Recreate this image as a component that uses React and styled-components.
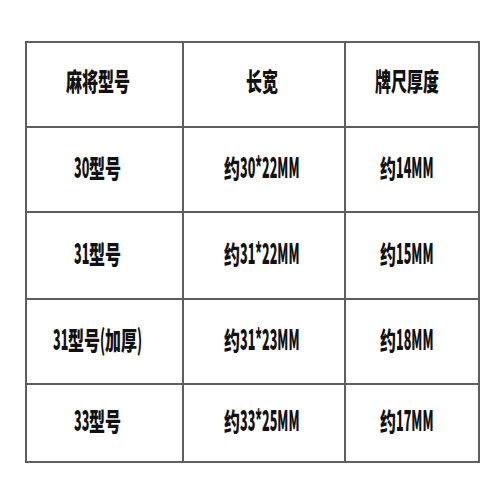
import React, { useLayoutEffect, useRef, useState } from "react";
import styled, { createGlobalStyle } from "styled-components";

const Global = createGlobalStyle`
  html, body { margin: 0; padding: 0; background: #fff; }
  body { width: 500px; height: 500px; overflow: hidden; }
`;

const Page = styled.div`
  padding: 41px 0 0 25px;
`;

const Grid = styled.div`
  display: inline-grid;
  grid-template-columns: 155px 160px 132px;
  grid-template-rows: 83px 83px 85px 83px 76px;
  gap: 2px;
  padding: 2px;
  background: #5e5e5e;
`;

const Cell = styled.div`
  background: #fff;
  display: flex;
  align-items: center;
  justify-content: center;
  padding: 0 ${(p) => p.$shift}px 8px 0;
`;

const Label = styled.span`
  display: inline-flex;
  align-items: baseline;
  font-family: "Noto Sans CJK SC", "Noto Sans", sans-serif;
  font-weight: 900;
  line-height: 1;
  color: #111;
  white-space: nowrap;
`;

const SqOuter = styled.span`
  display: inline-block;
  font-size: ${(p) => p.$size}px;
`;

const SqInner = styled.span`
  display: inline-block;
  transform: scaleX(${(p) => p.$k});
  transform-origin: 0 50%;
`;

function Squeeze({ k, size, children }) {
  const ref = useRef(null);
  const [w, setW] = useState(null);
  useLayoutEffect(() => {
    const measure = () => ref.current && setW(ref.current.offsetWidth);
    measure();
    if (document.fonts && document.fonts.ready) document.fonts.ready.then(measure);
  }, []);
  return (
    <SqOuter $size={size} style={w != null ? { width: w * k } : undefined}>
      <SqInner ref={ref} $k={k}>
        {children}
      </SqInner>
    </SqOuter>
  );
}

function Text({ children }) {
  const parts = children.match(/[\x00-\x7f]+|[^\x00-\x7f]+/g) || [];
  return (
    <Label>
      {parts.map((p, i) => {
        const latin = /[\x00-\x7f]/.test(p);
        return (
          <Squeeze key={i} k={latin ? 0.45 : 0.64} size={latin ? 28 : 25}>
            {p}
          </Squeeze>
        );
      })}
    </Label>
  );
}

const rows = [
  ["麻将型号", "长宽", "牌尺厚度"],
  ["30型号", "约30*22MM", "约14MM"],
  ["31型号", "约31*22MM", "约15MM"],
  ["31型号(加厚)", "约31*23MM", "约18MM"],
  ["33型号", "约33*25MM", "约17MM"],
];

const shifts = [14, 4, 10];

export default function App() {
  return (
    <>
      <Global />
      <Page>
        <Grid>
          {rows.map((r, i) =>
            r.map((t, j) => (
              <Cell key={`${i}-${j}`} $shift={shifts[j]}>
                <Text>{t}</Text>
              </Cell>
            ))
          )}
        </Grid>
      </Page>
    </>
  );
}
